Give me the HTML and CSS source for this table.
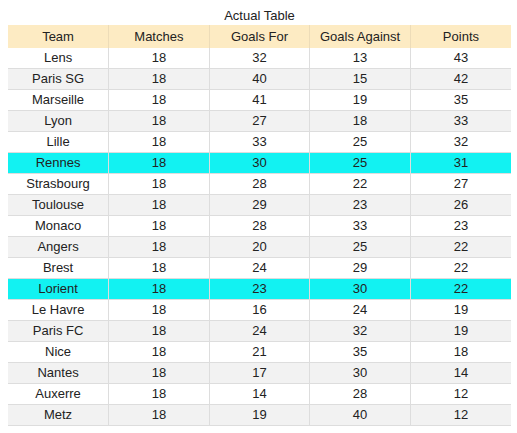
FILE: index.html
```html
<!DOCTYPE html>
<html>
<head>
<meta charset="utf-8">
<link rel="stylesheet" href="styles.css">
</head>
<body>
<div class="wrap">
  <div class="title">Actual Table</div>
  <table class="standings">
    <thead>
      <tr><th>Team</th><th>Matches</th><th>Goals For</th><th>Goals Against</th><th>Points</th></tr>
    </thead>
    <tbody>
      <tr><td>Lens</td><td>18</td><td>32</td><td>13</td><td>43</td></tr>
      <tr><td>Paris SG</td><td>18</td><td>40</td><td>15</td><td>42</td></tr>
      <tr><td>Marseille</td><td>18</td><td>41</td><td>19</td><td>35</td></tr>
      <tr><td>Lyon</td><td>18</td><td>27</td><td>18</td><td>33</td></tr>
      <tr><td>Lille</td><td>18</td><td>33</td><td>25</td><td>32</td></tr>
      <tr class="hl"><td>Rennes</td><td>18</td><td>30</td><td>25</td><td>31</td></tr>
      <tr><td>Strasbourg</td><td>18</td><td>28</td><td>22</td><td>27</td></tr>
      <tr><td>Toulouse</td><td>18</td><td>29</td><td>23</td><td>26</td></tr>
      <tr><td>Monaco</td><td>18</td><td>28</td><td>33</td><td>23</td></tr>
      <tr><td>Angers</td><td>18</td><td>20</td><td>25</td><td>22</td></tr>
      <tr><td>Brest</td><td>18</td><td>24</td><td>29</td><td>22</td></tr>
      <tr class="hl"><td>Lorient</td><td>18</td><td>23</td><td>30</td><td>22</td></tr>
      <tr><td>Le Havre</td><td>18</td><td>16</td><td>24</td><td>19</td></tr>
      <tr><td>Paris FC</td><td>18</td><td>24</td><td>32</td><td>19</td></tr>
      <tr><td>Nice</td><td>18</td><td>21</td><td>35</td><td>18</td></tr>
      <tr><td>Nantes</td><td>18</td><td>17</td><td>30</td><td>14</td></tr>
      <tr><td>Auxerre</td><td>18</td><td>14</td><td>28</td><td>12</td></tr>
      <tr><td>Metz</td><td>18</td><td>19</td><td>40</td><td>12</td></tr>
    </tbody>
  </table>
</div>
</body>
</html>
```
FILE: styles.css
```css
html, body {
  background: #ffffff;
}
body {
  margin: 6px 6px 0 8px;
  font-family: "Liberation Sans", Arial, sans-serif;
  font-size: 13px;
  color: #222222;
}
.wrap {
  width: 503px;
}
.title {
  text-align: center;
  line-height: 19px;
  height: 19px;
}
.standings {
  width: 503px;
  table-layout: fixed;
  border-collapse: collapse;
}
.standings th,
.standings td {
  height: 20px;
  padding: 0;
  text-align: center;
  font-weight: normal;
  line-height: 20px;
  border-left: 1px solid #dddddd;
  border-bottom: 1px solid #dddddd;
}
.standings th:first-child,
.standings td:first-child {
  border-left: none;
}
.standings thead tr {
  background: #fdebc3;
}
.standings thead th {
  border-bottom: none;
  height: 23px;
  line-height: 23px;
  border-left-color: #eddcb8;
}
.standings tbody tr:nth-child(even) {
  background: #f2f2f2;
}
.standings tbody tr.hl {
  background: #12f2f2;
}
```
